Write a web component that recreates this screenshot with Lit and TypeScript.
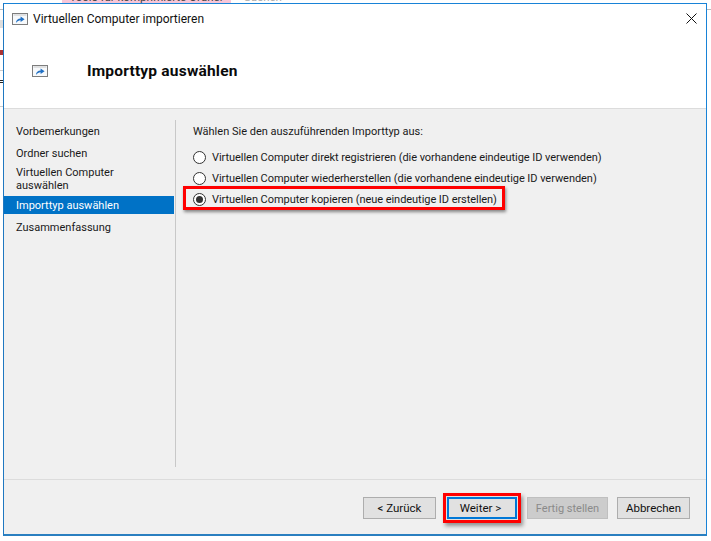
import { LitElement, html, css } from "lit";
import { customElement } from "lit/decorators.js";

const shortcut = (w: number) => html`<svg class="ico" width="${w}" height="${Math.round(w * 0.72)}" viewBox="0 0 16 12">
  <rect x=".5" y=".5" width="15" height="11" fill="#f7f9fb" stroke="#7d7d7d"/>
  <rect x="1.5" y="1.5" width="13" height="1" fill="#c9c9c9"/>
  <path d="M4 10C4 7 6 5.4 8.6 5.4V3.4L12.6 6.2 8.6 9V7.2C6.8 7.2 5.4 8 4 10Z" fill="#1f6fc4"/>
</svg>`;

@customElement("app-root")
export class AppRoot extends LitElement {
  static styles = css`
    :host {
      display: block; width: 711px; height: 541px; overflow: hidden; position: relative;
      background: #fff; font-family: Roboto, sans-serif; font-size: 11px; color: #1a1a1a;
    }
    .strip {
      position: absolute; left: 0; top: 0; width: 3px; height: 110px;
      background: linear-gradient(to bottom,
        #fff 0 9px, #bbb 9px 10px, #fff 10px 20px, #ddd 20px 28px, #fff 28px 50px,
        #a33 50px 55px, #fff 55px 70px, #ccc 70px 71px, #fff 71px 80px,
        #222 80px 81px, #fff 81px 82px, #222 82px 83px, #fff 83px 106px, #ccc 106px 107px, #fff 107px);
    }
    .right-line { position: absolute; right: 0; top: 9px; width: 4px; height: 1px; background: #bbb; }
    .behind { height: 3px; overflow: hidden; display: flex; color: #777; font-size: 11.5px; }
    .tag { margin-left: 62px; width: 169px; background: #f8c6d8; text-align: center; height: 3px; line-height: 0; color: #444; }
    .tag span, .sib span { display: block; transform: translateY(-3px); }
    .sib { margin-left: 13px; height: 3px; line-height: 0; color: #aaa; }
    .win {
      box-sizing: border-box; width: 704px; height: 533px; margin-left: 3px;
      border: 1px solid #1883d7; border-left-color: #1f78c1; border-bottom: 2px solid #2a7fc0;
      display: flex; flex-direction: column; background: #fff; position: relative;
    }
    .title { height: 26px; flex: none; display: flex; align-items: center; padding: 4px 0 0 8px; gap: 5px; font-size: 12px; color: #111; box-sizing: border-box; }
    .close { margin-left: auto; margin-right: 9px; display: block; margin-top: -1px; }
    .head { height: 79px; flex: none; display: flex; align-items: center; padding: 4px 0 0 28px; gap: 39px; border-bottom: 1px solid #dcdcdc; box-sizing: border-box; }
    .head h1 { margin: 0; font-size: 15.5px; letter-spacing: .2px; font-weight: 700; color: #0a0a0a; }
    .main { flex: 1; min-height: 0; display: flex; background: #f0f0f0; padding-top: 11px; box-sizing: border-box; }
    .side { width: 170px; flex: none; display: flex; flex-direction: column; margin-right: 1px; padding-top: 3px; }
    .side div { padding: 2px 0 2px 12px; line-height: 14px; }
    .side .it { height: 18px; box-sizing: border-box; margin-bottom: 4px; }
    .side .two { height: 28px; padding-top: 0; line-height: 13px; margin: -1px 0 0; }
    .side .sel { background: #0072c6; color: #fff; margin-bottom: 5px; padding-top: 3px; padding-bottom: 1px; }
    .rule { width: 1px; flex: none; background: #c8c8c8; height: 347px; }
    .content { flex: 1; padding: 5px 0 0 17px; letter-spacing: -.05px; }
    .content p { margin: 0 0 8px; line-height: 14px; letter-spacing: 0; }
    .opt { display: flex; align-items: center; gap: 6px; height: 21px; position: relative; }
    .r { width: 13px; height: 13px; box-sizing: border-box; border: 1px solid #333; border-radius: 50%; background: #fff; flex: none; display: flex; align-items: center; justify-content: center; }
    .r i { width: 7px; height: 7px; border-radius: 50%; background: #333; display: block; }
    .mark { position: absolute; left: -10px; top: -3px; width: 322px; height: 24px; box-sizing: border-box; border: 3px solid #f00; box-shadow: 1px 2px 3px rgba(0,0,0,.45); pointer-events: none; }
    .foot { height: 55px; flex: none; border-top: 1px solid #dcdcdc; background: #f0f0f0; display: flex; justify-content: flex-end; padding: 17px 16px 0 0; box-sizing: border-box; gap: 10px; }
    button { font: inherit; font-size: 11.5px; color: #111; height: 22px; box-sizing: border-box; border: 1px solid #adadad; background: #e1e1e1; padding: 0; }
    .b1 { width: 73px; }
    .b2 { width: 70px; border: 2px solid #0078d7; margin: 0 0 0 1px; padding-right: 3px; box-shadow: 0 0 0 1px #e1e1e1, 0 0 0 4px #f00, 2px 3px 4px 4px rgba(0,0,0,.4); position: relative; }
    .b3 { width: 81px; background: #ccc; border-color: #bfbfbf; color: #8a8a8a; font-size: 11px; margin-right: -1px; }
    .b4 { width: 73px; }
  `;

  render() {
    return html`
      <div class="strip"></div>
      <div class="right-line"></div>
      <div class="behind">
        <div class="tag"><span>Tools für komprimierte Ordner</span></div>
        <div class="sib"><span>Suchen</span></div>
      </div>
      <div class="win">
        <div class="title">
          ${shortcut(16)}<span>Virtuellen Computer importieren</span>
          <svg class="close" width="11" height="11" viewBox="0 0 11 11"><path d="M.5.5l10 10M10.5.5l-10 10" stroke="#111" fill="none"/></svg>
        </div>
        <div class="head">${shortcut(16)}<h1>Importtyp auswählen</h1></div>
        <div class="main">
          <div class="side">
            <div class="it">Vorbemerkungen</div>
            <div class="it">Ordner suchen</div>
            <div class="two">Virtuellen Computer<br>auswählen</div>
            <div class="it sel">Importtyp auswählen</div>
            <div class="it">Zusammenfassung</div>
          </div>
          <div class="rule"></div>
          <div class="content">
            <p>Wählen Sie den auszuführenden Importtyp aus:</p>
            <div class="opt"><span class="r"></span>Virtuellen Computer direkt registrieren (die vorhandene eindeutige ID verwenden)</div>
            <div class="opt"><span class="r"></span>Virtuellen Computer wiederherstellen (die vorhandene eindeutige ID verwenden)</div>
            <div class="opt"><span class="r"><i></i></span>Virtuellen Computer kopieren (neue eindeutige ID erstellen)<span class="mark"></span></div>
          </div>
        </div>
        <div class="foot">
          <button class="b1">&lt; Zurück</button>
          <button class="b2">Weiter &gt;</button>
          <button class="b3">Fertig stellen</button>
          <button class="b4">Abbrechen</button>
        </div>
      </div>
    `;
  }
}
